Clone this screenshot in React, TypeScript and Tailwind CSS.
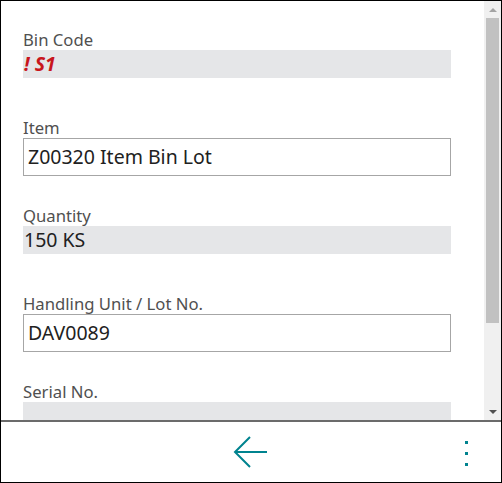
import React from "react";

const font = { fontFamily: '"Noto Sans", "Open Sans", sans-serif' };

function Label({ children }: { children: React.ReactNode }) {
  return <div className="text-[16.7px] leading-[20px] text-[#505050]">{children}</div>;
}

function ReadOnly({ children, className = "" }: { children?: React.ReactNode; className?: string }) {
  return (
    <div className={`h-[28px] w-[428px] bg-[#e5e6e8] px-[1px] text-[19.5px] leading-[28px] text-[#212121] ${className}`}>
      {children}
    </div>
  );
}

function Input({ value }: { value: string }) {
  return (
    <div className="h-[38px] w-[428px] border border-[#a6a6a6] bg-white px-[4px] text-[19.5px] leading-[36px] text-[#212121]">
      {value}
    </div>
  );
}

export default function App() {
  return (
    <div className="h-[483px] w-[502px] border border-black bg-white flex flex-col" style={font}>
      <div className="flex h-[419px] shrink-0">
        <div className="flex-1 overflow-hidden pl-[22px] pt-[29px]">
          <Label>Bin Code</Label>
          <ReadOnly className="font-bold italic text-[#c8161d]">! S1</ReadOnly>

          <div className="mt-[40px]">
            <Label>Item</Label>
            <Input value="Z00320 Item Bin Lot" />
          </div>

          <div className="mt-[30px]">
            <Label>Quantity</Label>
            <ReadOnly>150 KS</ReadOnly>
          </div>

          <div className="mt-[40px]">
            <Label>Handling Unit / Lot No.</Label>
            <Input value="DAV0089" />
          </div>

          <div className="mt-[30px]">
            <Label>Serial No.</Label>
            <ReadOnly />
          </div>
        </div>

        {/* scrollbar */}
        <div className="flex w-[17px] flex-col items-center bg-[#f0f0f0]">
          <div className="flex h-[17px] w-full items-center justify-center">
            <div className="h-0 w-0 border-x-[4px] border-b-[4px] border-x-transparent border-b-[#a3a3a3]" />
          </div>
          <div className="h-[305px] w-[13px] bg-[#c1c1c1]" />
          <div className="flex-1" />
          <div className="flex h-[17px] w-full items-center justify-center">
            <div className="h-0 w-0 border-x-[4px] border-t-[4px] border-x-transparent border-t-[#505050]" />
          </div>
        </div>
      </div>

      <div className="relative flex flex-1 items-center justify-center border-t-2 border-[#6b6b6b]">
        <svg width="36" height="32" viewBox="0 0 36 32" fill="none" stroke="#00838f" strokeWidth="2">
          <path d="M34 16H2M17 1L2 16l15 15" />
        </svg>
        <div className="absolute right-[33px] top-[19px] flex flex-col gap-[8px]">
          <div className="h-[3px] w-[3px] bg-[#00838f]" />
          <div className="h-[3px] w-[3px] bg-[#00838f]" />
          <div className="h-[3px] w-[3px] bg-[#00838f]" />
        </div>
      </div>
    </div>
  );
}
